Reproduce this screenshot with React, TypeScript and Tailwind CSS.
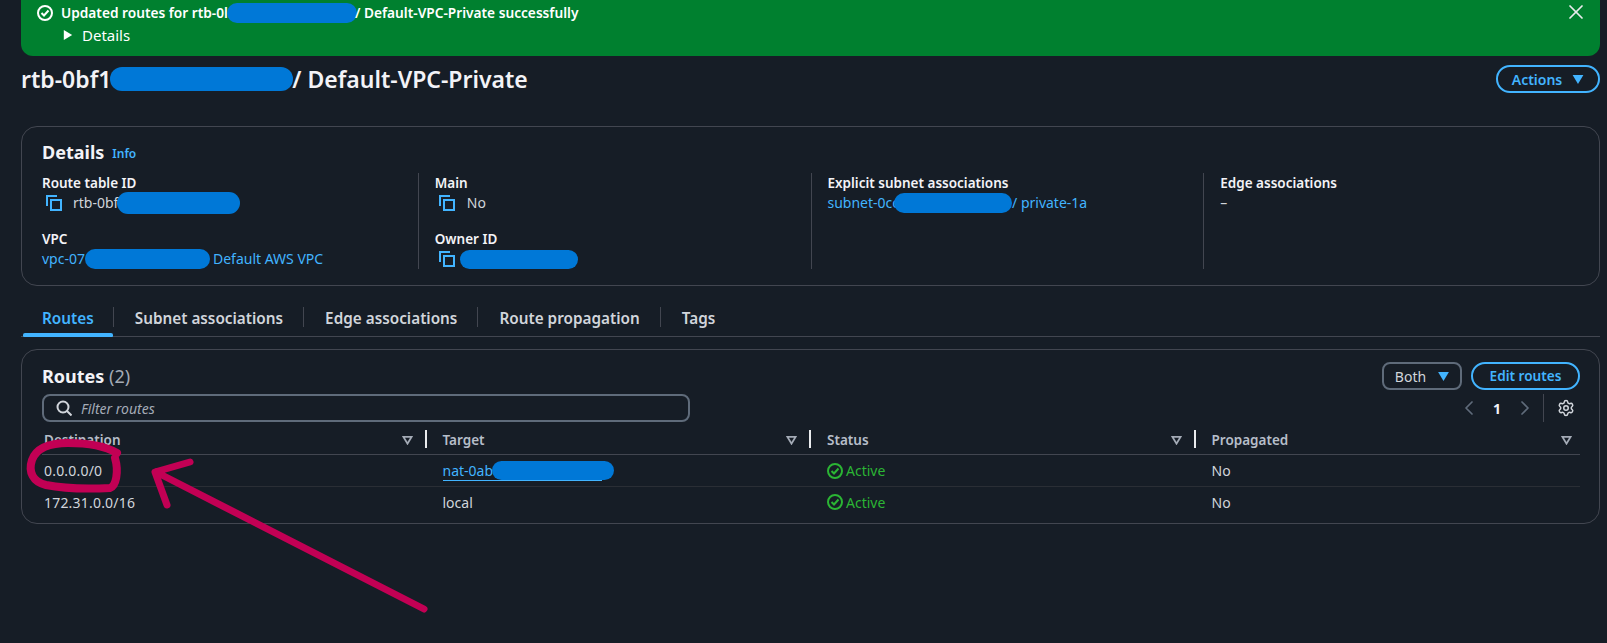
import { ChevronLeft, ChevronRight, Settings, X } from "lucide-react";

const columns = ["Destination", "Target", "Status", "Propagated"];

function Blob({ className }: { className: string }) {
  return <span className={`inline-block shrink-0 rounded-full bg-[#0078d7] ${className}`} />;
}

function CopyIcon() {
  return (
    <svg viewBox="0 0 16 16" className="h-4 w-4 shrink-0 text-[#42b4ff]" fill="none" stroke="currentColor" strokeWidth="2">
      <rect x="5" y="5" width="10" height="10" />
      <path d="M1 11V1h10" />
    </svg>
  );
}

function StatusCheck({ className }: { className: string }) {
  return (
    <svg viewBox="0 0 16 16" className={`h-4 w-4 shrink-0 ${className}`} fill="none" stroke="currentColor" strokeWidth="2">
      <circle cx="8" cy="8" r="7" />
      <path d="M4.5 8 7 10.5 11.5 5.5" />
    </svg>
  );
}

function Caret({ className }: { className: string }) {
  return (
    <svg viewBox="0 0 12 10" className={`shrink-0 fill-current ${className}`}>
      <path d="M0 0h12L6 10z" />
    </svg>
  );
}

function SortIcon() {
  return (
    <svg viewBox="0 0 12 10" className="h-[9px] w-[11px] shrink-0" fill="none" stroke="#a4abb6" strokeWidth="2">
      <path d="M1.5 1h9L6 8.5z" />
    </svg>
  );
}

function Label({ children }: { children: React.ReactNode }) {
  return <div className="h-5 text-[13.5px] leading-5 font-semibold text-[#f3f3f7]">{children}</div>;
}

function Annotations() {
  return (
    <svg className="pointer-events-none absolute inset-0 h-full w-full" viewBox="0 0 1607 643" fill="none" stroke="#c20054" strokeLinecap="round" strokeLinejoin="round">
      <path strokeWidth="8" d="M117 453C105 446 85 443 68 443C48 443 36 449 32 460C28 472 33 482 46 485C66 489 90 489 110 488C116 486 119 472 115 458" />
      <path strokeWidth="7" d="M424 609 156 472M190 462 155 472 167 505" />
    </svg>
  );
}

function RouteRow({ destination, target, last }: { destination: string; target: React.ReactNode; last?: boolean }) {
  return (
    <div className={`grid grid-cols-4 items-center text-[14px] text-[#d1d5db] ${last ? "h-[30px]" : "h-[32px] border-b border-[#2a2e35]"}`}>
      <div className="pl-[2px] tracking-[0.2px]">{destination}</div>
      <div className="pl-[16px]">{target}</div>
      <div className="flex items-center gap-[3px] pl-[16px] text-[#2bb534]">
        <StatusCheck className="text-[#2bb534]" />
        Active
      </div>
      <div className="pl-[16px]">No</div>
    </div>
  );
}

export default function App() {
  return (
    <div className="relative h-[643px] w-full overflow-hidden bg-[#161d26] pr-[7px] pl-[21px] font-['Noto_Sans',sans-serif]">
      {/* flash banner */}
      <div className="relative h-[56px] rounded-b-[12px] bg-[#00802f] pt-[3px] pl-[16px] text-[14px] leading-5 text-white">
        <div className="flex h-5 items-center text-[13.7px] font-semibold">
          <StatusCheck className="text-white" />
          <span className="ml-2">Updated routes for rtb-0l</span>
          <Blob className="-ml-[1px] h-5 w-[130px]" />
          <span className="-ml-[2px]">/ Default-VPC-Private successfully</span>
        </div>
        <div className="mt-[2px] flex h-5 items-center pl-[26px]">
          <Caret className="h-[12px] w-[10px] -rotate-90" />
          <span className="ml-[9px] text-[15px]">Details</span>
        </div>
        <X className="absolute top-0 right-[12px] h-6 w-6 text-[#e9ebed]" strokeWidth={1.75} />
      </div>

      {/* page header */}
      <div className="mt-[9px] flex h-[28px] items-center justify-between">
        <h1 className="flex items-center text-[23px] leading-[28px] font-semibold text-[#f3f3f7]">
          rtb-0bf1
          <Blob className="-ml-[1px] h-6 w-[183px]" />
          <span className="-ml-[1px]">/ Default-VPC-Private</span>
        </h1>
        <button className="flex h-[28px] w-[104px] items-center justify-center gap-[10px] rounded-full border-2 border-[#42b4ff] text-[14px] font-semibold text-[#42b4ff]">
          Actions
          <Caret className="h-[9px] w-[12px]" />
        </button>
      </div>

      {/* details */}
      <div className="mt-[33px] h-[160px] rounded-[16px] border border-[#424650] px-[3px] pt-[14px]">
        <div className="flex h-[22px] items-center pl-[17px]">
          <h2 className="text-[18px] font-bold text-[#f3f3f7]">Details</h2>
          <span className="ml-[8px] pt-[3px] text-[12px] font-semibold text-[#42b4ff]">Info</span>
        </div>
        <div className="mt-[10px] grid h-[96px] grid-cols-4 text-[14px] leading-5 text-[#d1d5db]">
          <div className="pl-[17px]">
            <Label>Route table ID</Label>
            <div className="flex h-5 items-center pl-1">
              <CopyIcon />
              <span className="ml-[11px]">rtb-0bf</span>
              <Blob className="-ml-[1px] h-[22px] w-[123px]" />
            </div>
            <div className="mt-4">
              <Label>VPC</Label>
              <div className="flex h-5 items-center text-[#42b4ff]">
                vpc-07
                <Blob className="ml-0 h-5 w-[125px]" />
                <span className="ml-[3px]">Default AWS VPC</span>
              </div>
            </div>
          </div>
          <div className="border-l border-[#424650] pl-4">
            <Label>Main</Label>
            <div className="flex h-5 items-center pl-1">
              <CopyIcon />
              <span className="ml-[12px]">No</span>
            </div>
            <div className="mt-4">
              <Label>Owner ID</Label>
              <div className="flex h-5 items-center pl-1">
                <CopyIcon />
                <Blob className="ml-[5px] h-[19px] w-[118px]" />
              </div>
            </div>
          </div>
          <div className="border-l border-[#424650] pl-4">
            <Label>Explicit subnet associations</Label>
            <div className="flex h-5 items-center text-[#42b4ff]">
              subnet-0cc
              <Blob className="-ml-[5px] h-5 w-[118px]" />
              <span>/ private-1a</span>
            </div>
          </div>
          <div className="border-l border-[#424650] pl-4">
            <Label>Edge associations</Label>
            <div>–</div>
          </div>
        </div>
      </div>

      {/* tabs */}
      <div className="flex h-[51px] items-end border-b border-[#424650] text-[15.3px] font-semibold text-[#d1d5db]">
        <div className="relative mb-[9px] flex h-[20px] items-center pt-[2px] pr-[19px] pl-[21px] text-[#42b4ff]">
          Routes
          <span className="absolute -bottom-[10px] left-[2px] h-1 w-[90px] rounded-t-[2px] rounded-b-[1px] bg-[#42b4ff]" />
        </div>
        {["Subnet associations", "Edge associations", "Route propagation", "Tags"].map((tab) => (
          <div key={tab} className="mb-[9px] flex h-[20px] items-center border-l border-[#424650] pt-[2px] pr-[20px] pl-[21px]">
            {tab}
          </div>
        ))}
      </div>

      {/* routes */}
      <div className="mt-3 h-[175px] rounded-[16px] border border-[#424650] pr-[19px] pl-[20px]">
        <div className="flex items-start justify-between">
          <div className="pt-[15px]">
            <h2 className="h-[22px] text-[18px] leading-[22px] font-bold text-[#f3f3f7]">
              Routes <span className="font-normal text-[#a4abb6]">(2)</span>
            </h2>
            <div className="mt-[7px] flex h-[28px] w-[648px] items-center rounded-[8px] border-2 border-[#5f6b7a] pl-3 text-[14px] text-[#a4abb6] italic">
              <svg viewBox="0 0 16 16" className="h-4 w-4 shrink-0" fill="none" stroke="#d1d5db" strokeWidth="2">
                <circle cx="7" cy="7" r="5.5" />
                <path d="m11 11 4.5 4.5" />
              </svg>
              <span className="ml-[9px]">Filter routes</span>
            </div>
          </div>
          <div className="flex flex-col items-end pt-3">
            <div className="flex gap-[9px] text-[14px]">
              <button className="flex h-[28px] w-[80px] items-center justify-center gap-3 rounded-[8px] border-2 border-[#5f6b7a] text-[#d1d5db]">
                Both
                <Caret className="h-[9px] w-[11px] text-[#42b4ff]" />
              </button>
              <button className="h-[28px] w-[109px] rounded-full border-2 border-[#42b4ff] text-[13.6px] font-semibold text-[#42b4ff]">
                Edit routes
              </button>
            </div>
            <div className="mt-1 flex h-[28px] w-full items-center justify-end pr-[5px]">
              <ChevronLeft className="h-6 w-6 text-[#5f6b7a]" strokeWidth={1.75} />
              <span className="mx-[8px] w-[16px] text-center text-[14px] font-bold text-[#f3f3f7]">1</span>
              <ChevronRight className="h-6 w-6 text-[#5f6b7a]" strokeWidth={1.75} />
              <span className="mr-[13px] ml-[6px] h-[28px] border-l border-[#424650]" />
              <Settings className="h-[18px] w-[18px] text-[#d1d5db]" strokeWidth={2} />
            </div>
          </div>
        </div>
        <div className="mt-[5px]">
          <div className="grid h-[28px] grid-cols-4 items-center border-b border-[#424650] text-[13.5px] font-semibold text-[#b6bec9]">
            {columns.map((column, index) => (
              <div key={column} className={`relative flex items-center justify-between ${index === 0 ? "pl-[2px]" : "pl-[16px]"} ${index === 3 ? "pr-[8px]" : "pr-[14px]"}`}>
                {column}
                <SortIcon />
                {index < 3 && <span className="absolute top-0 right-0 h-[18px] w-[2px] bg-[#e9ebed]" />}
              </div>
            ))}
          </div>
          <RouteRow
            destination="0.0.0.0/0"
            target={
              <span className="flex h-5 w-[159px] items-center border-b border-[#42b4ff] whitespace-nowrap text-[#42b4ff]">
                nat-0ab
                <Blob className="-ml-[1px] h-[19px] w-[122px]" />
              </span>
            }
          />
          <RouteRow destination="172.31.0.0/16" target="local" last />
        </div>
      </div>

      <Annotations />
    </div>
  );
}
